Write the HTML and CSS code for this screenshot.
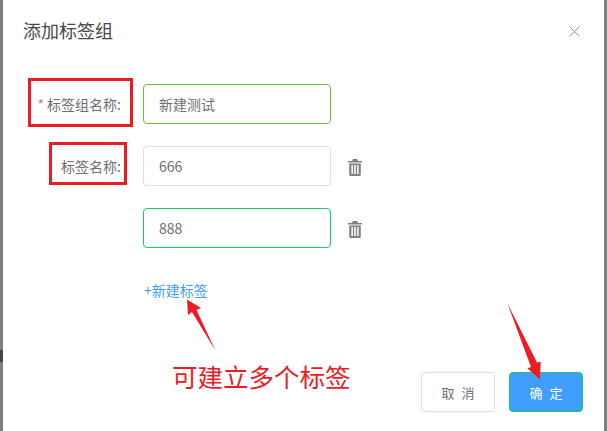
FILE: index.html
```html
<!DOCTYPE html>
<html lang="zh-CN">
<head>
<meta charset="utf-8">
<title>添加标签组</title>
<link rel="stylesheet" href="styles.css">
</head>
<body>
<div class="page">
  <div class="backdrop backdrop-left"></div>
  <main class="dialog">
    <header class="dialog-header">
      <h1 class="dialog-title">添加标签组</h1>
      <svg class="close-icon" viewBox="0 0 11 11"><path d="M.5.5l10 10M10.5.5l-10 10"/></svg>
    </header>
    <form class="form">
      <div class="row">
        <label class="label"><span class="req">*</span> 标签组名称:</label>
        <div class="input input-group">新建测试</div>
      </div>
      <div class="row">
        <label class="label">标签名称:</label>
        <div class="input">666</div>
        <svg class="trash" viewBox="0 0 14 17"><path d="M5 0h4l1 2h4v1.600H0V2h4z"/><path fill-rule="evenodd" d="M1.200 4.400h11.600V15.400a1.600 1.600 0 0 1-1.600 1.600H2.800a1.600 1.600 0 0 1-1.600-1.600zM3.400 6v9h1.500V6zM6.200 6v9h1.600V6zM9.100 6v9h1.500V6z"/></svg>
      </div>
      <div class="row">
        <div class="label"></div>
        <div class="input input-ok">888</div>
        <svg class="trash" viewBox="0 0 14 17"><path d="M5 0h4l1 2h4v1.600H0V2h4z"/><path fill-rule="evenodd" d="M1.200 4.400h11.600V15.400a1.600 1.600 0 0 1-1.600 1.600H2.800a1.600 1.600 0 0 1-1.600-1.600zM3.400 6v9h1.500V6zM6.200 6v9h1.600V6zM9.100 6v9h1.500V6z"/></svg>
      </div>
      <div class="row">
        <div class="label"></div>
        <a class="add-link">+新建标签</a>
      </div>
    </form>
    <footer class="footer">
      <button class="btn" type="button">取 消</button>
      <button class="btn btn-primary" type="button">确 定</button>
    </footer>
  </main>
  <div class="backdrop backdrop-right"></div>

  <div class="mark mark-group"></div>
  <div class="mark mark-name"></div>
  <p class="note">可建立多个标签</p>
  <svg class="arrows" viewBox="0 0 607 431">
    <path d="M215.700 351 L196.500 310 L201 308 L187 299.500 L188 315 L192 312 Z"/>
    <path d="M507.300 303 L537 362.500 L540.700 361.700 L540 379.500 L527.300 368.300 L531 367 Z"/>
  </svg>
</div>
</body>
</html>
```
FILE: styles.css
```css
* { box-sizing: border-box; }
html, body { margin: 0; height: 100%; }
body {
  font-family: "Noto Sans CJK SC", "Liberation Sans", sans-serif;
  overflow: hidden;
  background: #fff;
}
.page { position: relative; display: flex; width: 607px; height: 431px; }
.backdrop { width: 3px; background: #7f7f7f; flex: none; }
.backdrop-left { background: linear-gradient(#7f7f7f 350px, #444 350px, #444 362px, #7f7f7f 362px); }
.dialog { flex: 1; background: #fff; display: flex; flex-direction: column; }
.dialog-header {
  display: flex; align-items: center; justify-content: space-between;
  height: 62px; padding: 0 24px 2px 20px;
}
.dialog-title { margin: 0; font-size: 18px; font-weight: 400; line-height: 24px; color: #45474b; }
.close-icon { width: 11px; height: 11px; fill: none; stroke: #909399; stroke-width: 1; margin-top: 2px; }
.form { padding-top: 22px; flex: 1; }
.row { display: flex; align-items: center; height: 40px; margin-bottom: 22px; }
.label {
  width: 140px; flex: none; padding-right: 22px;
  text-align: right; font-size: 14px; color: #6b6e73; line-height: 40px;
}
.req { color: #f56c6c; }
.input {
  width: 188px; height: 40px; flex: none;
  border: 1px solid #dcdfe6; border-radius: 4px;
  padding: 0 15px; font-size: 14px; line-height: 38px; color: #6b6e73;
}
.input-group { border-color: #67c23a; }
.input-ok { border-color: #13ce66; }
.trash { width: 14px; height: 17px; margin-left: 17px; fill: #808080; margin-top: 2px; }
.add-link { font-size: 14px; line-height: 20px; color: #409eff; margin-left: 1px; }
.footer { display: flex; justify-content: flex-end; gap: 14px; padding: 0 21px 19px 0; }
.btn {
  width: 74px; height: 40px; padding: 0;
  font: 13px "Noto Sans CJK SC", sans-serif; word-spacing: 4px; color: #6b6e73;
  background: #fff; border: 1px solid #dcdfe6; border-radius: 4px;
}
.btn-primary { background: #409eff; border-color: #13ce66; color: #fff; }
.mark { position: absolute; border: 3px solid #ed1c24; }
.mark-group { left: 28px; top: 78px; width: 105px; height: 49px; }
.mark-name { left: 49px; top: 142px; width: 78px; height: 43px; }
.note {
  position: absolute; left: 172px; top: 355px; margin: 0;
  font-size: 25.500px; line-height: 42px; color: #ed1c24; white-space: nowrap;
}
.arrows { position: absolute; inset: 0; width: 607px; height: 431px; fill: #ed1c24; pointer-events: none; }
```
